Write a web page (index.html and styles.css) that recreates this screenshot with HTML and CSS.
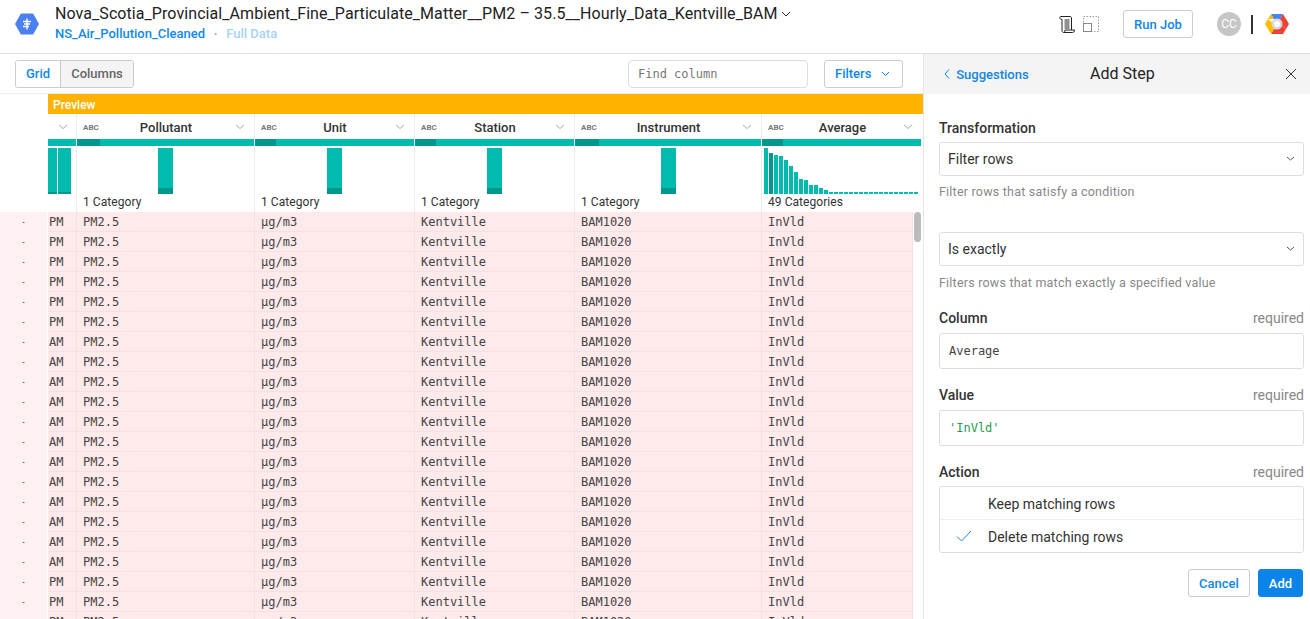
FILE: index.html
```html
<!DOCTYPE html>
<html lang="en">
<head>
    <meta charset="UTF-8">
    <title>Add Step</title>
    <link rel="stylesheet" href="styles.css">
</head>
<body>
    <header class="topbar">
        <svg class="logo" width="24" height="24" viewBox="0 0 24 24">
            <path d="M6.500 1.500h11a1 1 0 0 1 .9.500l5.300 9.500a1 1 0 0 1 0 1l-5.300 9.500a1 1 0 0 1-.9.500h-11a1 1 0 0 1-.9-.500L.3 12.500a1 1 0 0 1 0-1L5.600 2a1 1 0 0 1 .9-.500z" fill="#4a80f0"/>
            <path d="M12 6.500v11M8 9.500h8M9 12h6M8 14.500h6" stroke="#fff" stroke-width="1.400" fill="none"/>
        </svg>
        <div class="titles">
            <div class="title">Nova_Scotia_Provincial_Ambient_Fine_Particulate_Matter__PM2 – 35.5__Hourly_Data_Kentville_BAM
                <svg width="10" height="6" viewBox="0 0 10 6"><path d="M1 1l4 4 4-4" stroke="#333" fill="none"/></svg>
            </div>
            <div class="subtitle"><span class="link">NS_Air_Pollution_Cleaned</span><span class="dot">•</span><span class="link-light">Full Data</span></div>
        </div>
        <div class="top-actions">
            <svg class="icon-scroll" width="16" height="17" viewBox="0 0 16 17">
                <path d="M1.500 .5h9.500c1 0 1.500.6 1.500 1.500V14M1.500 .5C.5 .5 .2 3.500 3 3.500V14.500c0 1.200.7 2 1.800 2H13.500c1.200 0 2-1 2-2.500H6c0 1.500-.4 2.500-1.200 2.500" fill="none" stroke="#222"/>
                <path d="M5.500 4h5M5.500 6h5M5.500 8h5M5.500 10h5M5.500 12h5" stroke="#222"/>
            </svg>
            <svg class="icon-layout" width="16" height="16" viewBox="0 0 16 16">
                <rect x=".5" y=".5" width="15" height="15" fill="none" stroke="#999" stroke-dasharray="1.500 1.500"/>
                <rect x=".5" y="7.500" width="8" height="8" fill="#fff" stroke="#888"/>
            </svg>
            <button class="btn run-job">Run Job</button>
            <div class="avatar">CC</div>
            <div class="divider"></div>
            <svg class="cloud" width="24" height="22" viewBox="0 0 24 22">
                <path d="M6 1h12l-3 5H9z" fill="#4285f4"/>
                <path d="M18 1l6 10-3 5-6-5-0-5z" fill="#ea4335"/>
                <path d="M21 16l-3 5H6l3-5 6-5z" fill="#ea4335"/>
                <path d="M6 21L0 11l3-5 6 5-0 5z" fill="#fbbc05"/>
                <path d="M3 6l3-5 3 5z" fill="#fbbc05"/>
                <circle cx="12" cy="11" r="5.500" fill="#d9d9d9"/>
                <circle cx="12" cy="11" r="3" fill="#fff"/>
            </svg>
        </div>
    </header>

    <div class="workspace">
        <main class="data-view">
            <div class="toolbar">
                <div class="segmented">
                    <button class="seg seg-active">Grid</button>
                    <button class="seg">Columns</button>
                </div>
                <input class="find-column" placeholder="Find column">
                <button class="btn filters">Filters
                    <svg width="9" height="6" viewBox="0 0 9 6"><path d="M1 1l3.500 3.500L8 1" stroke="#0f86e8" fill="none"/></svg>
                </button>
            </div>

            <div class="grid-wrap">
                <div class="preview-bar">Preview</div>

                <div class="grid-row head-row">
                    <div></div>
                    <div class="head-cell"><svg class="chev" width="10" height="6" viewBox="0 0 10 6"><path d="M1 1l4 3.500L9 1" stroke="#aaa" fill="none"/></svg></div>
                    <div class="head-cell"><span class="abc">ABC</span><span class="col-name">Pollutant</span><svg class="chev" width="10" height="6" viewBox="0 0 10 6"><path d="M1 1l4 3.500L9 1" stroke="#aaa" fill="none"/></svg></div>
                    <div class="head-cell"><span class="abc">ABC</span><span class="col-name">Unit</span><svg class="chev" width="10" height="6" viewBox="0 0 10 6"><path d="M1 1l4 3.500L9 1" stroke="#aaa" fill="none"/></svg></div>
                    <div class="head-cell"><span class="abc">ABC</span><span class="col-name">Station</span><svg class="chev" width="10" height="6" viewBox="0 0 10 6"><path d="M1 1l4 3.500L9 1" stroke="#aaa" fill="none"/></svg></div>
                    <div class="head-cell"><span class="abc">ABC</span><span class="col-name">Instrument</span><svg class="chev" width="10" height="6" viewBox="0 0 10 6"><path d="M1 1l4 3.500L9 1" stroke="#aaa" fill="none"/></svg></div>
                    <div class="head-cell"><span class="abc">ABC</span><span class="col-name">Average</span><svg class="chev" width="10" height="6" viewBox="0 0 10 6"><path d="M1 1l4 3.500L9 1" stroke="#aaa" fill="none"/></svg></div>
                </div>

                <div class="grid-row quality-row">
                    <div></div>
                    <div class="quality"></div>
                    <div class="quality"><i style="width:23px"></i></div>
                    <div class="quality"><i style="width:21px"></i></div>
                    <div class="quality"><i style="width:21px"></i></div>
                    <div class="quality"><i style="width:24px"></i></div>
                    <div class="quality"><i style="width:21px"></i></div>
                </div>

                <div class="grid-row hist-row">
                    <div></div>
                    <div class="hist hist-first"><span class="bar narrow"></span><span class="bar wide"></span></div>
                    <div class="hist"><div class="hist-plot"><span class="bar single"></span></div><div class="cat">1 Category</div></div>
                    <div class="hist"><div class="hist-plot"><span class="bar single"></span></div><div class="cat">1 Category</div></div>
                    <div class="hist"><div class="hist-plot"><span class="bar single"></span></div><div class="cat">1 Category</div></div>
                    <div class="hist"><div class="hist-plot"><span class="bar single"></span></div><div class="cat">1 Category</div></div>
                    <div class="hist"><div class="hist-plot spark">
                        <span style="height:46px"></span><span class="dark" style="height:41px"></span><span style="height:39px"></span><span style="height:38px"></span><span style="height:34px"></span><span style="height:28px"></span><span style="height:22px"></span><span style="height:15px"></span><span style="height:14px"></span><span style="height:9px"></span><span style="height:9px"></span><span style="height:6px"></span><span style="height:4px"></span><span></span><span></span><span></span><span></span><span></span><span></span><span></span><span></span><span></span><span></span><span></span><span></span><span></span><span></span><span></span><span></span><span></span><span></span>
                    </div><div class="cat">49 Categories</div></div>
                </div>

                <div class="rows">
                    <div class="grid-row data-row"><div class="gut">-</div><div>PM</div><div class="pad">PM2.5</div><div class="pad">µg/m3</div><div class="pad">Kentville</div><div class="pad">BAM1020</div><div class="pad">InVld</div></div>
                    <div class="grid-row data-row"><div class="gut">-</div><div>PM</div><div class="pad">PM2.5</div><div class="pad">µg/m3</div><div class="pad">Kentville</div><div class="pad">BAM1020</div><div class="pad">InVld</div></div>
                    <div class="grid-row data-row"><div class="gut">-</div><div>PM</div><div class="pad">PM2.5</div><div class="pad">µg/m3</div><div class="pad">Kentville</div><div class="pad">BAM1020</div><div class="pad">InVld</div></div>
                    <div class="grid-row data-row"><div class="gut">-</div><div>PM</div><div class="pad">PM2.5</div><div class="pad">µg/m3</div><div class="pad">Kentville</div><div class="pad">BAM1020</div><div class="pad">InVld</div></div>
                    <div class="grid-row data-row"><div class="gut">-</div><div>PM</div><div class="pad">PM2.5</div><div class="pad">µg/m3</div><div class="pad">Kentville</div><div class="pad">BAM1020</div><div class="pad">InVld</div></div>
                    <div class="grid-row data-row"><div class="gut">-</div><div>PM</div><div class="pad">PM2.5</div><div class="pad">µg/m3</div><div class="pad">Kentville</div><div class="pad">BAM1020</div><div class="pad">InVld</div></div>
                    <div class="grid-row data-row"><div class="gut">-</div><div>AM</div><div class="pad">PM2.5</div><div class="pad">µg/m3</div><div class="pad">Kentville</div><div class="pad">BAM1020</div><div class="pad">InVld</div></div>
                    <div class="grid-row data-row"><div class="gut">-</div><div>AM</div><div class="pad">PM2.5</div><div class="pad">µg/m3</div><div class="pad">Kentville</div><div class="pad">BAM1020</div><div class="pad">InVld</div></div>
                    <div class="grid-row data-row"><div class="gut">-</div><div>AM</div><div class="pad">PM2.5</div><div class="pad">µg/m3</div><div class="pad">Kentville</div><div class="pad">BAM1020</div><div class="pad">InVld</div></div>
                    <div class="grid-row data-row"><div class="gut">-</div><div>AM</div><div class="pad">PM2.5</div><div class="pad">µg/m3</div><div class="pad">Kentville</div><div class="pad">BAM1020</div><div class="pad">InVld</div></div>
                    <div class="grid-row data-row"><div class="gut">-</div><div>AM</div><div class="pad">PM2.5</div><div class="pad">µg/m3</div><div class="pad">Kentville</div><div class="pad">BAM1020</div><div class="pad">InVld</div></div>
                    <div class="grid-row data-row"><div class="gut">-</div><div>AM</div><div class="pad">PM2.5</div><div class="pad">µg/m3</div><div class="pad">Kentville</div><div class="pad">BAM1020</div><div class="pad">InVld</div></div>
                    <div class="grid-row data-row"><div class="gut">-</div><div>AM</div><div class="pad">PM2.5</div><div class="pad">µg/m3</div><div class="pad">Kentville</div><div class="pad">BAM1020</div><div class="pad">InVld</div></div>
                    <div class="grid-row data-row"><div class="gut">-</div><div>AM</div><div class="pad">PM2.5</div><div class="pad">µg/m3</div><div class="pad">Kentville</div><div class="pad">BAM1020</div><div class="pad">InVld</div></div>
                    <div class="grid-row data-row"><div class="gut">-</div><div>AM</div><div class="pad">PM2.5</div><div class="pad">µg/m3</div><div class="pad">Kentville</div><div class="pad">BAM1020</div><div class="pad">InVld</div></div>
                    <div class="grid-row data-row"><div class="gut">-</div><div>AM</div><div class="pad">PM2.5</div><div class="pad">µg/m3</div><div class="pad">Kentville</div><div class="pad">BAM1020</div><div class="pad">InVld</div></div>
                    <div class="grid-row data-row"><div class="gut">-</div><div>AM</div><div class="pad">PM2.5</div><div class="pad">µg/m3</div><div class="pad">Kentville</div><div class="pad">BAM1020</div><div class="pad">InVld</div></div>
                    <div class="grid-row data-row"><div class="gut">-</div><div>AM</div><div class="pad">PM2.5</div><div class="pad">µg/m3</div><div class="pad">Kentville</div><div class="pad">BAM1020</div><div class="pad">InVld</div></div>
                    <div class="grid-row data-row"><div class="gut">-</div><div>PM</div><div class="pad">PM2.5</div><div class="pad">µg/m3</div><div class="pad">Kentville</div><div class="pad">BAM1020</div><div class="pad">InVld</div></div>
                    <div class="grid-row data-row"><div class="gut">-</div><div>PM</div><div class="pad">PM2.5</div><div class="pad">µg/m3</div><div class="pad">Kentville</div><div class="pad">BAM1020</div><div class="pad">InVld</div></div>
                    <div class="grid-row data-row"><div class="gut">-</div><div>PM</div><div class="pad">PM2.5</div><div class="pad">µg/m3</div><div class="pad">Kentville</div><div class="pad">BAM1020</div><div class="pad">InVld</div></div>
                </div>
                <div class="scroll-thumb"></div>
            </div>
        </main>

        <aside class="panel">
            <div class="panel-head">
                <span class="back">
                    <svg width="6" height="10" viewBox="0 0 6 10"><path d="M5 .5L1 5l4 4.500" stroke="#0f86e8" fill="none"/></svg>
                    Suggestions
                </span>
                <span class="panel-title">Add Step</span>
                <svg class="close" width="12" height="12" viewBox="0 0 12 12"><path d="M1 1l10 10M11 1L1 11" stroke="#333" fill="none"/></svg>
            </div>
            <div class="panel-body">
                <label class="field-label first">Transformation</label>
                <div class="select">Filter rows
                    <svg width="9" height="6" viewBox="0 0 9 6"><path d="M1 1l3.500 3L8 1" stroke="#555" fill="none"/></svg>
                </div>
                <p class="help">Filter rows that satisfy a condition</p>
                <div class="select second">Is exactly
                    <svg width="9" height="6" viewBox="0 0 9 6"><path d="M1 1l3.500 3L8 1" stroke="#555" fill="none"/></svg>
                </div>
                <p class="help help-last">Filters rows that match exactly a specified value</p>
                <label class="field-label">Column <span class="req">required</span></label>
                <div class="code-input">Average</div>
                <label class="field-label">Value <span class="req">required</span></label>
                <div class="code-input green">'InVld'</div>
                <label class="field-label">Action <span class="req">required</span></label>
                <div class="options">
                    <div class="option">Keep matching rows</div>
                    <div class="option">
                        <svg class="check" width="16" height="12" viewBox="0 0 16 12"><path d="M1 6.500L5.500 11 15 1" stroke="#1a89e8" fill="none"/></svg>
                        Delete matching rows
                    </div>
                </div>
                <div class="panel-actions">
                    <button class="btn cancel">Cancel</button>
                    <button class="btn add">Add</button>
                </div>
            </div>
        </aside>
    </div>
</body>
</html>
```
FILE: styles.css
```css
html, body {
    margin: 0;
    height: 619px;
    overflow: hidden;
}
body {
    font-family: Roboto, sans-serif;
    color: #333;
    background: #fff;
}
button {
    font-family: Roboto, sans-serif;
}
.topbar {
    display: flex;
    align-items: flex-start;
    height: 53px;
    border-bottom: 1px solid #e0e0e0;
}
.logo {
    margin: 12px 0 0 15px;
}
.titles {
    margin-left: 16px;
    margin-top: 3px;
}
.title {
    font-size: 16px;
    line-height: 22px;
    color: #222;
    white-space: nowrap;
    letter-spacing: .07px;
}
.title svg {
    margin-left: -1px;
    vertical-align: 2px;
}
.subtitle {
    font-size: 13px;
    font-weight: 500;
    line-height: 18px;
    margin-top: 0;
}
.link {
    color: #1089ea;
}
.dot {
    color: #aaa;
    font-size: 9px;
    margin: 0 9px;
    vertical-align: 1px;
}
.link-light {
    color: #a5d2f7;
}
.top-actions {
    display: flex;
    align-items: center;
    margin-left: auto;
    height: 48px;
    padding-right: 21px;
}
.icon-scroll {
    margin-right: 8px;
}
.btn {
    background: #fff;
    border: 1px solid #ccc;
    border-radius: 3px;
    color: #0f86e8;
    font-size: 13px;
    font-weight: 500;
    height: 28px;
    padding: 0;
    cursor: pointer;
}
.run-job {
    width: 70px;
    margin-left: 24px;
}
.avatar {
    width: 24px;
    height: 24px;
    border-radius: 50%;
    background: #c6c6c6;
    color: #fff;
    font-size: 12px;
    line-height: 24px;
    text-align: center;
    margin-left: 24px;
}
.divider {
    width: 2px;
    height: 19px;
    background: #333;
    margin: 0 12px 0 10px;
}
.workspace {
    display: flex;
    height: 565px;
}
.data-view {
    width: 923px;
    border-right: 1px solid #e6e6e6;
    overflow: hidden;
}
.toolbar {
    display: flex;
    align-items: center;
    height: 39px;
    padding: 0 20px 0 15px;
    border-bottom: 1px solid #eee;
}
.segmented {
    display: flex;
    border: 1px solid #ccc;
    border-radius: 3px;
    overflow: hidden;
    height: 26px;
}
.seg {
    border: 0;
    background: #f4f4f4;
    color: #666;
    font-size: 13px;
    font-weight: 500;
    padding: 0;
    width: 72px;
}
.seg-active {
    background: #fff;
    color: #0f86e8;
    width: 45px;
    border-right: 1px solid #ccc;
}
.find-column {
    margin-left: auto;
    width: 180px;
    height: 28px;
    box-sizing: border-box;
    border: 1px solid #ddd;
    border-radius: 4px;
    padding: 0 9px;
    font-family: "DejaVu Sans Mono", monospace;
    font-size: 12px;
    outline: none;
}
.find-column::placeholder {
    color: #777;
}
.filters {
    width: 79px;
    margin-left: 16px;
    text-align: left;
    padding-left: 10px;
}
.filters svg {
    margin-left: 6px;
    vertical-align: 1px;
}
.grid-wrap {
    position: relative;
}
.preview-bar {
    margin-left: 48px;
    height: 20px;
    line-height: 22px;
    background: #ffb300;
    color: #fff;
    font-size: 12px;
    font-weight: 500;
    padding-left: 5px;
}
.grid-row {
    display: grid;
    grid-template-columns: 48px 29px 178px 160px 160px 187px 160px;
}
.head-row {
    height: 25px;
}
.head-row > div {
    border-right: 1px solid #eee;
}
.head-row > div:first-child,
.head-row > div:last-child {
    border-right: 0;
}
.head-cell {
    display: flex;
    align-items: center;
    box-sizing: border-box;
    padding: 2px 9px 0 6px;
    height: 25px;
}
.head-cell:nth-child(2) {
    justify-content: flex-end;
    padding-right: 8px;
}
.abc {
    font-size: 8px;
    font-weight: 700;
    color: #777;
    width: 16px;
}
.col-name {
    flex: 1;
    text-align: center;
    font-size: 13px;
    font-weight: 500;
    color: #333;
    margin-left: -2px;
}
.chev {
    flex: none;
    margin-bottom: 2px;
}
.quality-row {
    height: 7px;
}
.quality {
    background: #00bbae;
    margin-right: 1px;
}
.quality i {
    display: block;
    height: 7px;
    background: #00988d;
}
.hist-row {
    height: 66px;
}
.hist {
    border-right: 1px solid #eee;
    box-sizing: border-box;
    padding-top: 2px;
}
.hist:last-child {
    border-right: 0;
}
.hist-first {
    display: flex;
    gap: 1px;
    align-items: flex-start;
}
.bar {
    display: block;
    height: 44px;
    background: #00bbae;
    border-bottom: 2px solid #00988d;
}
.narrow {
    width: 9px;
}
.wide {
    width: 13px;
}
.hist-plot {
    display: flex;
    justify-content: center;
    height: 46px;
}
.single {
    width: 15px;
    height: 40px;
    border-bottom-width: 6px;
}
.spark {
    justify-content: flex-start;
    align-items: flex-end;
    gap: 1px;
    padding-left: 2px;
}
.spark span {
    display: block;
    width: 4px;
    height: 2px;
    background: #00bbae;
}
.spark .dark {
    background: #00988d;
}
.cat {
    font-size: 12px;
    line-height: 14px;
    margin-top: 1px;
    padding-left: 6px;
    color: #333;
    letter-spacing: .06px;
}
.data-row {
    grid-template-columns: 48px 29px 178px 160px 160px 187px 151px;
    grid-auto-rows: 20px;
    height: 20px;
    background: #fee9eb;
    width: 913px;
    font-family: "DejaVu Sans Mono", monospace;
    font-size: 12px;
    line-height: 21px;
    color: #444;
}
.data-row > div {
    box-sizing: border-box;
    height: 20px;
    border-right: 1px solid #f8dfe1;
    border-bottom: 1px solid #f8dfe1;
    padding-left: 1px;
    white-space: nowrap;
}
.data-row > div.pad {
    padding-left: 6px;
}
.data-row > div.gut {
    background: #fff0f1;
    border: 0;
    border-right: 1px solid #fff;
    padding: 0;
    text-align: center;
    font-size: 8px;
}
.scroll-thumb {
    position: absolute;
    top: 118px;
    right: 2px;
    width: 7px;
    height: 30px;
    border-radius: 4px;
    background: #bbb;
}
.panel {
    flex: 1;
}
.panel-head {
    display: flex;
    align-items: center;
    position: relative;
    height: 40px;
    background: #f4f4f4;
}
.back {
    margin-left: 20px;
    color: #0f86e8;
    font-size: 13px;
    font-weight: 500;
}
.back svg {
    margin-right: 3px;
}
.panel-title {
    position: absolute;
    left: 166px;
    top: 10px;
    font-size: 16px;
    color: #222;
}
.close {
    margin-left: auto;
    margin-right: 13px;
}
.panel-body {
    padding: 26px 6px 0 15px;
}
.field-label {
    display: flex;
    justify-content: space-between;
    font-size: 14px;
    font-weight: 500;
    line-height: 16px;
    color: #333;
    margin: 18px 0 7px;
}
.field-label.first {
    margin-top: 0;
    margin-bottom: 6px;
}
.req {
    font-size: 14px;
    font-weight: 400;
    color: #888;
}
.select {
    display: flex;
    justify-content: space-between;
    align-items: center;
    height: 34px;
    box-sizing: border-box;
    border: 1px solid #ddd;
    border-radius: 3px;
    padding: 0 8px;
    font-size: 14px;
    color: #333;
}
.second {
    margin-top: 33px;
}
.help {
    margin: 8px 0 0;
    font-size: 12.500px;
    line-height: 15px;
    color: #888;
    letter-spacing: .21px;
}
.help-last {
    margin: 9px 0 20px;
}
.code-input {
    height: 36px;
    box-sizing: border-box;
    border: 1px solid #ddd;
    border-radius: 3px;
    padding: 0 9px;
    line-height: 34px;
    font-family: "DejaVu Sans Mono", monospace;
    font-size: 12px;
    color: #444;
}
.green {
    color: #1e9e50;
}
.options {
    border: 1px solid #ddd;
    border-radius: 3px;
    margin-top: -1px;
}
.option {
    display: flex;
    align-items: center;
    box-sizing: border-box;
    height: 32px;
    padding: 2px 0 0 48px;
    position: relative;
    font-size: 14px;
    color: #333;
}
.option + .option {
    height: 33px;
    border-top: 1px solid #eee;
}
.check {
    position: absolute;
    left: 16px;
    top: 10px;
}
.panel-actions {
    display: flex;
    justify-content: flex-end;
    gap: 8px;
    margin: 16px 1px 0 0;
}
.cancel {
    width: 62px;
}
.add {
    width: 45px;
    background: #0a84e8;
    border-color: #0a84e8;
    color: #fff;
}
```
